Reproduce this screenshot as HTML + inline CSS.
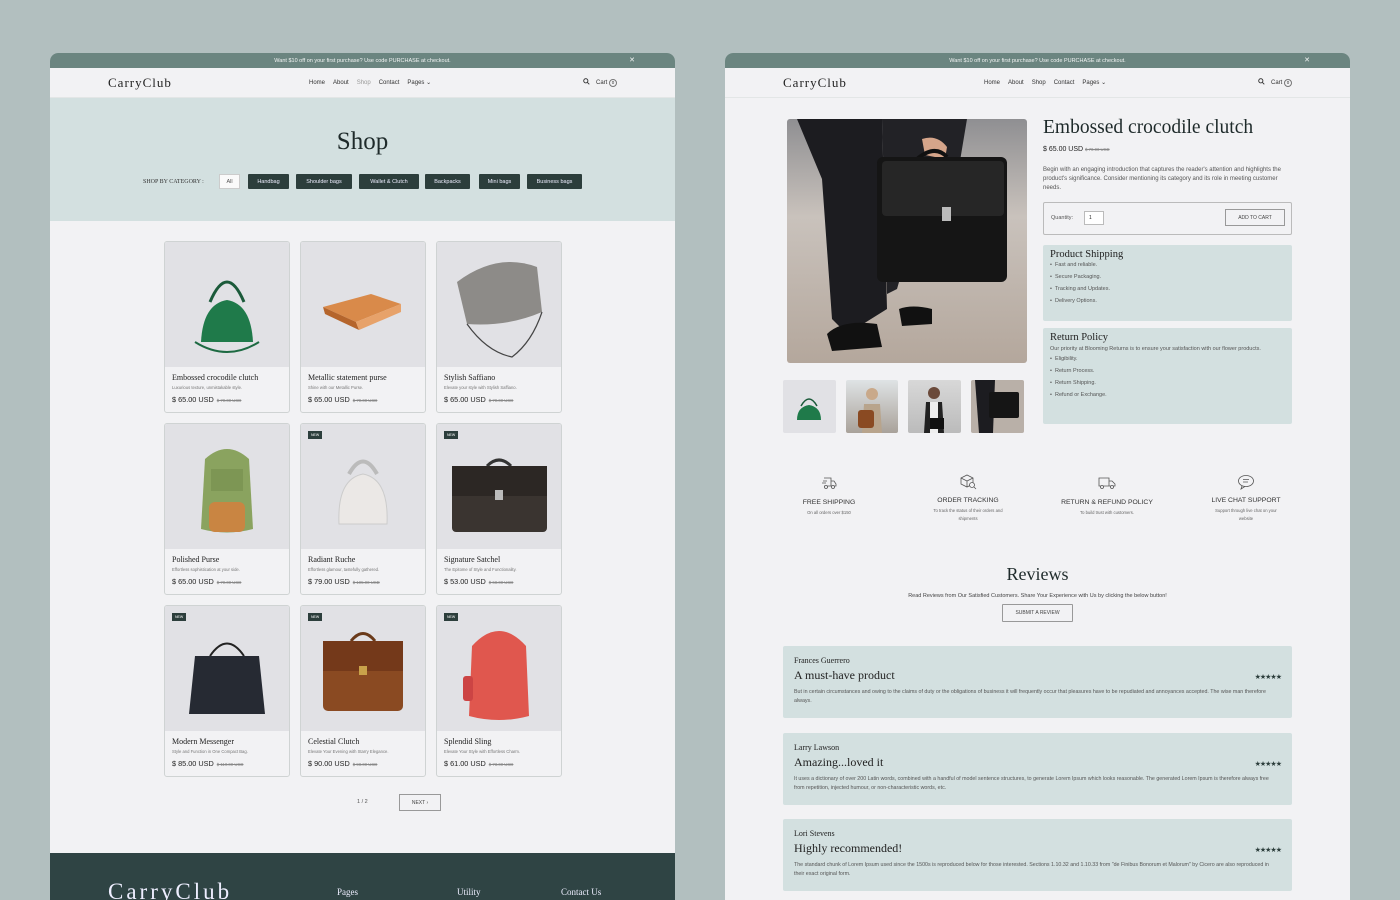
<!DOCTYPE html>
<html><head><meta charset="utf-8">
<style>
*{box-sizing:border-box;margin:0;padding:0}
body{width:1400px;height:900px;background:#b2bfbf;position:relative;overflow:hidden;font-family:"Liberation Sans",sans-serif;color:#222}
.abs{position:absolute}
.fc{display:flex;align-items:center;justify-content:center}
.panel{position:absolute;top:53px;width:625px;height:847px;background:#f2f2f4;border-radius:8px 8px 0 0;overflow:hidden}
.banner{position:absolute;left:0;top:0;width:625px;height:15px;background:#6b8580;color:#f3f5f4;font-size:5.5px;display:flex;align-items:center;justify-content:center}
.banner .x{position:absolute;right:40px;top:3px;font-size:7px}
.hdr{position:absolute;top:15px;left:0;width:625px;height:30px;background:#f2f2f4;border-bottom:1px solid #e3e6e6}
.logo{position:absolute;left:58px;top:7px;font-family:"Liberation Serif",serif;font-size:13px;letter-spacing:1px;color:#222}
.nav{position:absolute;left:259px;top:11px;font-size:6px;color:#333}
.nav span{margin-right:8px}
.cart{position:absolute;right:58px;top:10px;font-size:6px;color:#333}
.serif{font-family:"Liberation Serif",serif}
.card{position:absolute;width:126px;height:172px;border:1px solid #cfd3d3;border-radius:3px;background:#f2f2f4;overflow:hidden}
.card .im{position:absolute;left:0;top:0;width:124px;height:125px;background:#e1e1e5;overflow:hidden}
.card .t{position:absolute;left:7px;top:131px;font-family:"Liberation Serif",serif;font-size:8px;color:#222}
.card .d{position:absolute;left:7px;top:143px;font-size:4.2px;color:#777}
.card .p{position:absolute;left:7px;top:153px;font-size:7.3px;color:#222}
.card .p s{font-size:4.3px;color:#888;margin-left:3px}
.new{position:absolute;left:7px;top:7px;background:#2c3e3c;color:#fff;font-size:3.5px;padding:2px 3px}
.cat{position:absolute;top:121px;height:15px;background:#2c3e3c;color:#eef;font-size:5.5px;border-radius:1px;display:flex;align-items:center;justify-content:center}
.box{position:absolute;background:#d3e0e0;border-radius:2px}
.li{font-size:5.5px;color:#555;margin-top:6px}
.feat{position:absolute;width:120px;text-align:center}
.feat b{display:block;font-weight:normal;font-size:6.8px;color:#333;margin-top:4px}
.feat i{display:block;font-style:normal;font-size:4.2px;color:#666;margin-top:3px;line-height:8px}
.rv{position:absolute;left:58px;width:509px;height:72px;background:#d3e0e0;border-radius:2px}
.rv .n{position:absolute;left:11px;top:10px;font-family:"Liberation Serif",serif;font-size:8px;color:#222}
.rv .h{position:absolute;left:11px;top:22px;font-family:"Liberation Serif",serif;font-size:12px;color:#222}
.rv .s{position:absolute;right:11px;top:27px;font-size:7px;color:#2c3e3c;letter-spacing:-1px}
.rv .b{position:absolute;left:11px;top:42px;width:480px;font-size:5.3px;color:#555;line-height:9px}
</style></head><body>

<div class="panel" style="left:50px">
 <div class="banner">Want $10 off on your first purchase? Use code PURCHASE at checkout.<span class="x">✕</span></div>
 <div class="hdr">
  <div class="logo">CarryClub</div>
  <div class="nav"><span>Home</span><span>About</span><span style="color:#999">Shop</span><span>Contact</span><span>Pages ⌄</span></div>
  <div class="cart"><svg width="7" height="7" viewBox="0 0 10 10" style="vertical-align:-1px;margin-right:6px"><circle cx="4" cy="4" r="3" fill="none" stroke="#333" stroke-width="1.3"/><path d="M6.3 6.3L9 9" stroke="#333" stroke-width="1.3"/></svg>Cart <span style="display:inline-block;width:8px;height:8px;border:1px solid #777;border-radius:50%;font-size:4.5px;text-align:center;line-height:6px">0</span></div>
 </div>
 <div class="abs" style="left:0;top:45px;width:625px;height:123px;background:#d3e0e0"></div>
 <div class="abs serif" style="left:0;top:75px;width:625px;text-align:center;font-size:25px;color:#1e2a2a">Shop</div>
 <div class="abs serif fc" style="left:93px;top:121px;height:15px;font-size:6px;color:#333">SHOP BY CATEGORY :</div>
 <div class="abs fc" style="left:169px;top:121px;width:21px;height:15px;background:#fafafa;border:1px solid #ccc;font-size:5.5px;color:#555">All</div>
 <div class="cat" style="left:198px;width:41px">Handbag</div>
 <div class="cat" style="left:246px;width:56px">Shoulder bags</div>
 <div class="cat" style="left:309px;width:60px">Wallet &amp; Clutch</div>
 <div class="cat" style="left:375px;width:45px">Backpacks</div>
 <div class="cat" style="left:429px;width:41px">Mini bags</div>
 <div class="cat" style="left:477px;width:55px">Business bags</div>

 <div class="card" style="left:114px;top:188px"><div class="im">
  <svg width="124" height="125"><path d="M45 60 Q62 20 79 60" fill="none" stroke="#1b5a3a" stroke-width="3"/><path d="M30 100 Q62 120 94 100" fill="none" stroke="#1d6a42" stroke-width="2"/><path d="M36 100 Q38 62 62 58 Q86 62 88 100 Z" fill="#1f7a4a"/></svg></div>
  <div class="t">Embossed crocodile clutch</div><div class="d">Luxurious texture, unmistakable style.</div><div class="p">$ 65.00 USD<s>$ 70.00 USD</s></div></div>
 <div class="card" style="left:250px;top:188px"><div class="im">
  <svg width="124" height="125"><path d="M22 65 L70 52 L100 62 L55 80 Z" fill="#d98a4a"/><path d="M22 65 L55 80 L58 88 L24 72 Z" fill="#b5652c"/><path d="M55 80 L100 62 L100 70 L58 88 Z" fill="#e7a26a"/></svg></div>
  <div class="t">Metallic statement purse</div><div class="d">Shine with our Metallic Purse.</div><div class="p">$ 65.00 USD<s>$ 70.00 USD</s></div></div>
 <div class="card" style="left:386px;top:188px"><div class="im">
  <svg width="124" height="125"><path d="M20 40 Q60 10 100 25 L105 70 Q70 85 30 82 Z" fill="#8d8b88"/><path d="M30 82 Q50 110 75 115 Q95 100 105 70" fill="none" stroke="#444" stroke-width="1.2"/></svg></div>
  <div class="t">Stylish Saffiano</div><div class="d">Elevate your style with Stylish Saffiano.</div><div class="p">$ 65.00 USD<s>$ 70.00 USD</s></div></div>
 <div class="card" style="left:114px;top:370px"><div class="im">
  <svg width="124" height="125"><path d="M40 35 Q62 15 84 35 L88 105 Q62 112 36 105 Z" fill="#8aa35f"/><rect x="44" y="78" width="36" height="30" rx="6" fill="#c98542"/><rect x="46" y="45" width="32" height="22" fill="#7d9654"/></svg></div>
  <div class="t">Polished Purse</div><div class="d">Effortless sophistication at your side.</div><div class="p">$ 65.00 USD<s>$ 70.00 USD</s></div></div>
 <div class="card" style="left:250px;top:370px"><div class="im"><span class="new">NEW</span>
  <svg width="124" height="125"><path d="M48 50 Q62 25 76 50" fill="none" stroke="#bbb" stroke-width="4"/><path d="M38 100 Q36 55 62 50 Q88 55 86 100 Z" fill="#ebe8e6" stroke="#ccc"/></svg></div>
  <div class="t">Radiant Ruche</div><div class="d">Effortless glamour, tastefully gathered.</div><div class="p">$ 79.00 USD<s>$ 105.00 USD</s></div></div>
 <div class="card" style="left:386px;top:370px"><div class="im"><span class="new">NEW</span>
  <svg width="124" height="125"><path d="M50 42 Q62 30 74 42" fill="none" stroke="#333" stroke-width="3"/><rect x="15" y="42" width="95" height="66" rx="4" fill="#3a3430"/><rect x="15" y="42" width="95" height="30" fill="#2c2724"/><rect x="58" y="66" width="8" height="10" fill="#bbb"/></svg></div>
  <div class="t">Signature Satchel</div><div class="d">The Epitome of Style and Functionality.</div><div class="p">$ 53.00 USD<s>$ 68.00 USD</s></div></div>
 <div class="card" style="left:114px;top:552px"><div class="im"><span class="new">NEW</span>
  <svg width="124" height="125"><path d="M45 50 Q62 25 79 50" fill="none" stroke="#222" stroke-width="2"/><path d="M30 50 L94 50 L100 108 L24 108 Z" fill="#262a33"/></svg></div>
  <div class="t">Modern Messenger</div><div class="d">Style and Function in One Compact Bag.</div><div class="p">$ 85.00 USD<s>$ 110.00 USD</s></div></div>
 <div class="card" style="left:250px;top:552px"><div class="im"><span class="new">NEW</span>
  <svg width="124" height="125"><path d="M50 35 Q62 20 74 35" fill="none" stroke="#6a3a1a" stroke-width="3"/><rect x="22" y="35" width="80" height="70" rx="5" fill="#8a4a22"/><rect x="22" y="35" width="80" height="30" fill="#74391a"/><rect x="58" y="60" width="8" height="9" fill="#c9a24a"/></svg></div>
  <div class="t">Celestial Clutch</div><div class="d">Elevate Your Evening with Starry Elegance.</div><div class="p">$ 90.00 USD<s>$ 98.00 USD</s></div></div>
 <div class="card" style="left:386px;top:552px"><div class="im"><span class="new">NEW</span>
  <svg width="124" height="125"><path d="M35 40 Q62 10 89 40 L92 110 Q62 118 32 110 Z" fill="#e0574e"/><rect x="26" y="70" width="10" height="25" rx="3" fill="#c44"/></svg></div>
  <div class="t">Splendid Sling</div><div class="d">Elevate Your Style with Effortless Charm.</div><div class="p">$ 61.00 USD<s>$ 73.00 USD</s></div></div>

 <div class="abs" style="left:307px;top:746px;font-size:5.5px;color:#555">1 / 2</div>
 <div class="abs fc" style="left:349px;top:741px;width:42px;height:17px;border:1px solid #999;font-size:5px;color:#444">NEXT ›</div>

 <div class="abs" style="left:0;top:800px;width:625px;height:47px;background:#2f4444"></div>
 <div class="abs serif" style="left:58px;top:826px;font-size:23px;color:#eef;letter-spacing:3px">CarryClub</div>
 <div class="abs serif" style="left:287px;top:834px;font-size:9px;color:#eef">Pages</div>
 <div class="abs serif" style="left:407px;top:834px;font-size:9px;color:#eef">Utility</div>
 <div class="abs serif" style="left:511px;top:834px;font-size:9px;color:#eef">Contact Us</div>
</div>

<div class="panel" style="left:725px">
 <div class="banner">Want $10 off on your first purchase? Use code PURCHASE at checkout.<span class="x">✕</span></div>
 <div class="hdr">
  <div class="logo">CarryClub</div>
  <div class="nav"><span>Home</span><span>About</span><span>Shop</span><span>Contact</span><span>Pages ⌄</span></div>
  <div class="cart"><svg width="7" height="7" viewBox="0 0 10 10" style="vertical-align:-1px;margin-right:6px"><circle cx="4" cy="4" r="3" fill="none" stroke="#333" stroke-width="1.3"/><path d="M6.3 6.3L9 9" stroke="#333" stroke-width="1.3"/></svg>Cart <span style="display:inline-block;width:8px;height:8px;border:1px solid #777;border-radius:50%;font-size:4.5px;text-align:center;line-height:6px">0</span></div>
 </div>
 <div class="abs" style="left:62px;top:66px;width:240px;height:244px;border-radius:3px;overflow:hidden;background:linear-gradient(#8f8f92,#c9c2bc 40%,#b4a79c)">
  <svg width="240" height="244"><path d="M10 0 L95 0 L100 190 L60 215 L45 200 L35 60 Z" fill="#1c1c20"/><path d="M95 0 L180 0 L170 60 L130 100 L110 170 L100 175 Z" fill="#222226"/><path d="M40 215 Q55 200 90 205 L95 228 L45 232 Z" fill="#111"/><path d="M112 190 Q125 185 145 190 L145 205 L115 207 Z" fill="#111"/><path d="M135 20 Q150 15 160 28 L158 40 L138 36 Z" fill="#d5a58a"/><path d="M130 40 Q148 25 160 38" fill="none" stroke="#111" stroke-width="4"/><rect x="90" y="38" width="130" height="125" rx="6" fill="#151515"/><rect x="95" y="42" width="122" height="55" rx="4" fill="#262626"/><rect x="155" y="88" width="9" height="14" fill="#bbb"/></svg>
 </div>
 <div class="abs" style="left:58px;top:327px;width:53px;height:53px;background:#e1e1e5;border-radius:2px"><svg width="53" height="53"><path d="M18 26 Q26 12 34 26" fill="none" stroke="#1b5a3a" stroke-width="1.5"/><path d="M14 40 Q14 27 26 25 Q38 27 38 40Z" fill="#1f7a4a"/></svg></div>
 <div class="abs" style="left:121px;top:327px;width:52px;height:53px;background:linear-gradient(#dfe3e5,#a9a29a);border-radius:2px"><svg width="52" height="53"><circle cx="26" cy="14" r="6" fill="#c9a98a"/><path d="M16 53 L18 24 L34 24 L36 53Z" fill="#b8a48c"/><rect x="12" y="30" width="16" height="18" rx="3" fill="#8a4a22"/></svg></div>
 <div class="abs" style="left:183px;top:327px;width:53px;height:53px;background:linear-gradient(#d8d8d8,#bbb);border-radius:2px"><svg width="53" height="53"><circle cx="26" cy="13" r="6" fill="#6b4a3a"/><path d="M16 53 L18 22 L34 22 L36 53Z" fill="#222"/><rect x="22" y="22" width="8" height="31" fill="#eee"/><rect x="22" y="38" width="14" height="11" fill="#111"/></svg></div>
 <div class="abs" style="left:246px;top:327px;width:53px;height:53px;background:#b9b0a8;border-radius:2px"><svg width="53" height="53"><path d="M4 0 L24 0 L22 53 L8 53Z" fill="#1c1c20"/><rect x="18" y="12" width="30" height="26" rx="2" fill="#151515"/></svg></div>

 <div class="abs serif" style="left:318px;top:64px;font-size:19.5px;color:#1e2a2a">Embossed crocodile clutch</div>
 <div class="abs" style="left:318px;top:93px;font-size:7px;color:#222">$ 65.00 USD <s style="font-size:4.3px;color:#888">$ 70.00 USD</s></div>
 <div class="abs" style="left:318px;top:113px;width:250px;font-size:6px;color:#555;line-height:9px">Begin with an engaging introduction that captures the reader's attention and highlights the product's significance. Consider mentioning its category and its role in meeting customer needs.</div>
 <div class="abs" style="left:318px;top:149px;width:249px;height:33px;border:1px solid #bbb;border-radius:2px">
  <span class="abs fc" style="left:7px;top:8px;height:14px;font-size:5.5px;color:#555">Quantity:</span>
  <span class="abs" style="left:40px;top:8px;width:20px;height:14px;border:1px solid #bbb;background:#fff;font-size:5px;display:flex;align-items:center;padding-left:4px">1</span>
  <span class="abs fc" style="left:181px;top:6px;width:60px;height:17px;border:1px solid #999;font-size:5px;color:#444">ADD TO CART</span>
 </div>
 <div class="box" style="left:318px;top:192px;width:249px;height:76px;padding:4px 7px"><div class="serif" style="font-size:10.5px;color:#222">Product Shipping</div><div class="li" style="margin-top:2px">•&nbsp; Fast and reliable.</div><div class="li">•&nbsp; Secure Packaging.</div><div class="li">•&nbsp; Tracking and Updates.</div><div class="li">•&nbsp; Delivery Options.</div></div>
 <div class="box" style="left:318px;top:275px;width:249px;height:96px;padding:4px 7px"><div class="serif" style="font-size:10.5px;color:#222">Return Policy</div><div style="font-size:5.5px;color:#555;line-height:8px;margin-top:2px;width:215px">Our priority at Blooming Returns is to ensure your satisfaction with our flower products.</div><div class="li" style="margin-top:3px">•&nbsp; Eligibility.</div><div class="li">•&nbsp; Return Process.</div><div class="li">•&nbsp; Return Shipping.</div><div class="li">•&nbsp; Refund or Exchange.</div></div>

 <div class="feat" style="left:44px;top:423px"><svg width="16" height="14" viewBox="0 0 16 14"><path d="M3 2H10V10H3M10 5H13L15 8V10H10M2 5H6M1 7H5" fill="none" stroke="#555" stroke-width="0.8"/><circle cx="5" cy="11" r="1.5" fill="#f2f2f4" stroke="#555" stroke-width="0.8"/><circle cx="12" cy="11" r="1.5" fill="#f2f2f4" stroke="#555" stroke-width="0.8"/></svg><b>FREE SHIPPING</b><i>On all orders over $150</i></div>
 <div class="feat" style="left:183px;top:421px"><svg width="18" height="16" viewBox="0 0 18 16"><path d="M2 4L8 1L14 4V10L8 13L2 10Z M2 4L8 7L14 4 M8 7V13" fill="none" stroke="#555" stroke-width="0.8"/><circle cx="13" cy="11" r="2.5" fill="#f2f2f4" stroke="#555" stroke-width="0.8"/><path d="M15 13L17 15" stroke="#555" stroke-width="0.8"/></svg><b style="margin-top:2px">ORDER TRACKING</b><i>To track the status of their orders and<br>shipments</i></div>
 <div class="feat" style="left:322px;top:423px"><svg width="18" height="14" viewBox="0 0 18 14"><path d="M1 2H11V10H1Z M11 5H14L17 8V10H11" fill="none" stroke="#555" stroke-width="0.8"/><circle cx="4" cy="11" r="1.5" fill="#f2f2f4" stroke="#555" stroke-width="0.8"/><circle cx="14" cy="11" r="1.5" fill="#f2f2f4" stroke="#555" stroke-width="0.8"/></svg><b>RETURN &amp; REFUND POLICY</b><i>To build trust with customers.</i></div>
 <div class="feat" style="left:461px;top:421px"><svg width="18" height="16" viewBox="0 0 18 16"><ellipse cx="9" cy="7" rx="7.5" ry="5.5" fill="none" stroke="#555" stroke-width="0.8"/><path d="M5 12L4 15L8 12.4 M6 5.5H12M6 8H11" fill="none" stroke="#555" stroke-width="0.8"/></svg><b style="margin-top:2px">LIVE CHAT SUPPORT</b><i>Support through live chat on your<br>website</i></div>

 <div class="abs serif" style="left:0;top:511px;width:625px;text-align:center;font-size:18px;color:#1e2a2a">Reviews</div>
 <div class="abs" style="left:0;top:540px;width:625px;text-align:center;font-size:5.5px;color:#444">Read Reviews from Our Satisfied Customers. Share Your Experience with Us by clicking the below button!</div>
 <div class="abs fc" style="left:277px;top:551px;width:71px;height:18px;border:1px solid #999;border-radius:1px;font-size:5px;color:#444">SUBMIT A REVIEW</div>

 <div class="rv" style="top:593px"><div class="n">Frances Guerrero</div><div class="h">A must-have product</div><div class="s">★★★★★</div><div class="b">But in certain circumstances and owing to the claims of duty or the obligations of business it will frequently occur that pleasures have to be repudiated and annoyances accepted. The wise man therefore always.</div></div>
 <div class="rv" style="top:680px"><div class="n">Larry Lawson</div><div class="h">Amazing...loved it</div><div class="s">★★★★★</div><div class="b">It uses a dictionary of over 200 Latin words, combined with a handful of model sentence structures, to generate Lorem Ipsum which looks reasonable. The generated Lorem Ipsum is therefore always free from repetition, injected humour, or non-characteristic words, etc.</div></div>
 <div class="rv" style="top:766px"><div class="n">Lori Stevens</div><div class="h">Highly recommended!</div><div class="s">★★★★★</div><div class="b">The standard chunk of Lorem Ipsum used since the 1500s is reproduced below for those interested. Sections 1.10.32 and 1.10.33 from "de Finibus Bonorum et Malorum" by Cicero are also reproduced in their exact original form.</div></div>
</div>
</body></html>
